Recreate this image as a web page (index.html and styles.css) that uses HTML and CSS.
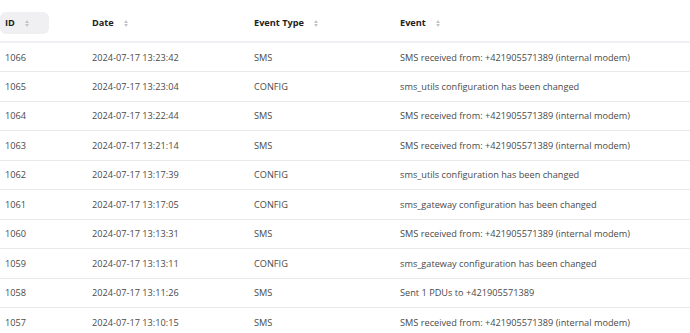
FILE: index.html
```html
<!DOCTYPE html>
<html>
<head>
<meta charset="utf-8">
<link rel="stylesheet" href="styles.css">
</head>
<body>
<table class="log">
  <thead>
    <tr>
      <th class="c-id"><span class="pill">ID <span class="sort"></span></span></th>
      <th class="c-date">Date <span class="sort"></span></th>
      <th class="c-type">Event Type <span class="sort"></span></th>
      <th class="c-ev">Event <span class="sort"></span></th>
    </tr>
  </thead>
  <tbody>
    <tr><td>1066</td><td>2024-07-17 13:23:42</td><td>SMS</td><td>SMS received from: +421905571389 (internal modem)</td></tr>
    <tr><td>1065</td><td>2024-07-17 13:23:04</td><td>CONFIG</td><td>sms_utils configuration has been changed</td></tr>
    <tr><td>1064</td><td>2024-07-17 13:22:44</td><td>SMS</td><td>SMS received from: +421905571389 (internal modem)</td></tr>
    <tr><td>1063</td><td>2024-07-17 13:21:14</td><td>SMS</td><td>SMS received from: +421905571389 (internal modem)</td></tr>
    <tr><td>1062</td><td>2024-07-17 13:17:39</td><td>CONFIG</td><td>sms_utils configuration has been changed</td></tr>
    <tr><td>1061</td><td>2024-07-17 13:17:05</td><td>CONFIG</td><td>sms_gateway configuration has been changed</td></tr>
    <tr><td>1060</td><td>2024-07-17 13:13:31</td><td>SMS</td><td>SMS received from: +421905571389 (internal modem)</td></tr>
    <tr><td>1059</td><td>2024-07-17 13:13:11</td><td>CONFIG</td><td>sms_gateway configuration has been changed</td></tr>
    <tr><td>1058</td><td>2024-07-17 13:11:26</td><td>SMS</td><td>Sent 1 PDUs to +421905571389</td></tr>
    <tr><td>1057</td><td>2024-07-17 13:10:15</td><td>SMS</td><td>SMS received from: +421905571389 (internal modem)</td></tr>
  </tbody>
</table>
</body>
</html>
```
FILE: styles.css
```css
html, body {
  margin: 0;
  padding: 0;
  background: #fff;
}
body {
  font-family: "Open Sans", "Noto Sans", sans-serif;
  font-size: 9.2px;
  color: #4a4a4a;
  overflow: hidden;
}
.log {
  width: 690px;
  border-collapse: collapse;
  table-layout: fixed;
}
.log th, .log td {
  box-sizing: border-box;
}
.c-id { width: 87px; }
.c-date { width: 162px; }
.c-type { width: 146px; }
.log th {
  text-align: left;
  font-weight: 700;
  color: #1f1f1f;
  height: 42px;
  padding: 4px 0 0 5px;
  border-bottom: 2px solid #eef0f3;
  white-space: nowrap;
}
.log th.c-id { padding-left: 0; }
.pill {
  display: inline-block;
  background: #f0f0f2;
  border-radius: 6px;
  width: 49px;
  height: 22px;
  line-height: 22px;
  padding-left: 5px;
  box-sizing: border-box;
}
.sort {
  display: inline-block;
  width: 4px;
  height: 7px;
  margin-left: 8px;
  vertical-align: -1px;
  position: relative;
}
.sort::before, .sort::after {
  content: "";
  position: absolute;
  left: 0;
  border-left: 2px solid transparent;
  border-right: 2px solid transparent;
}
.sort::before {
  top: 0;
  border-bottom: 3px solid #c4c4c4;
}
.sort::after {
  bottom: 0;
  border-top: 3px solid #c4c4c4;
}
.log td {
  height: 29.5px;
  padding: 0 0 0 5px;
  border-bottom: 1px solid #e8e9ec;
  white-space: nowrap;
}
```
